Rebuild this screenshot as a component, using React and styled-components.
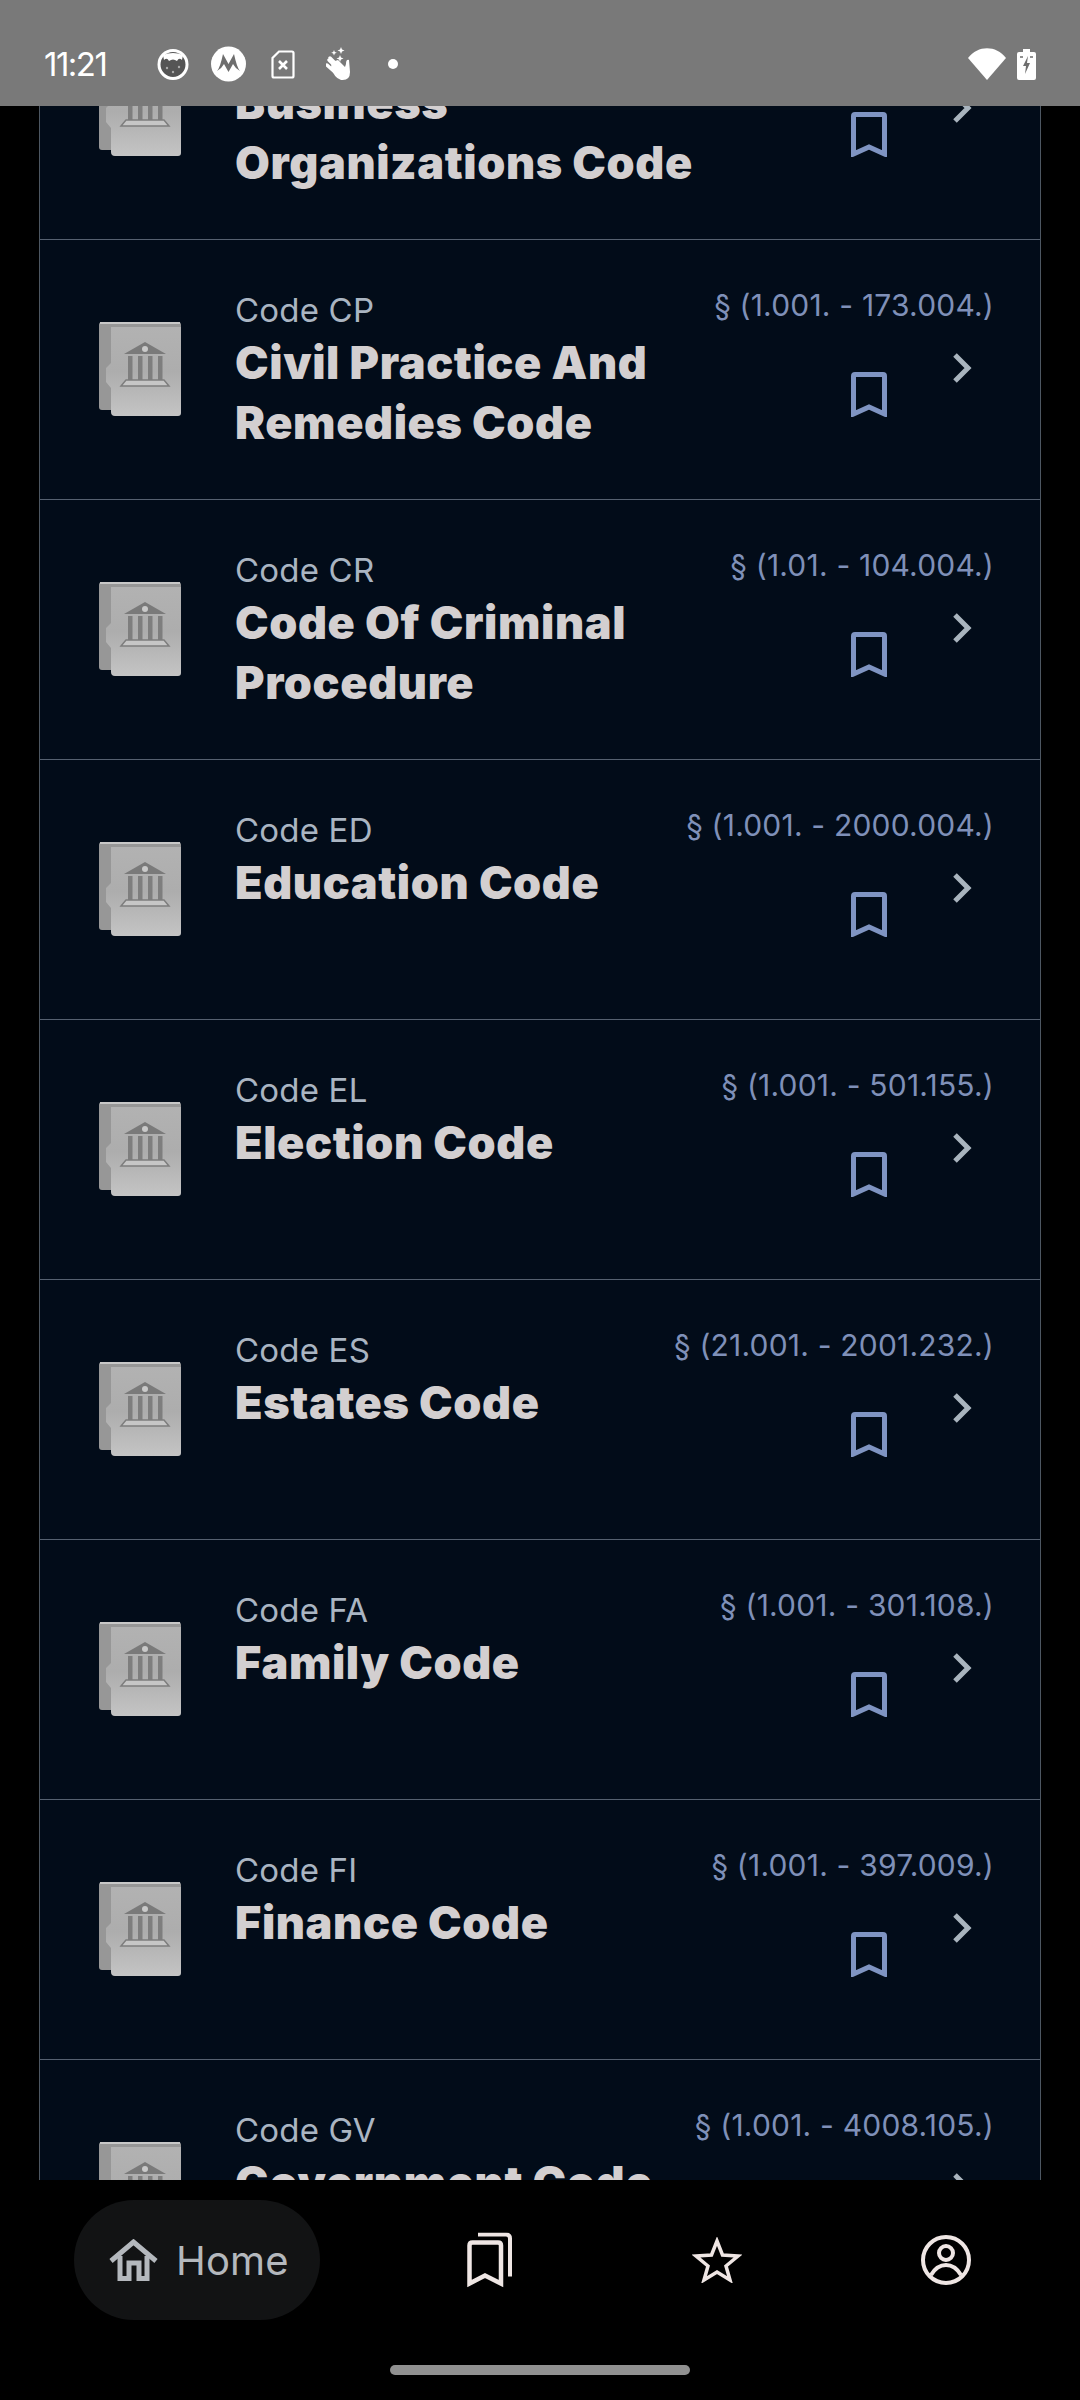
import React from "react";
import styled, { createGlobalStyle } from "styled-components";

const CODES = [
  { code: "Code BO", title: "Business Organizations Code", range: "§ (1.001. - 252.017.)" },
  { code: "Code CP", title: "Civil Practice And Remedies Code", range: "§ (1.001. - 173.004.)" },
  { code: "Code CR", title: "Code Of Criminal Procedure", range: "§ (1.01. - 104.004.)" },
  { code: "Code ED", title: "Education Code", range: "§ (1.001. - 2000.004.)" },
  { code: "Code EL", title: "Election Code", range: "§ (1.001. - 501.155.)" },
  { code: "Code ES", title: "Estates Code", range: "§ (21.001. - 2001.232.)" },
  { code: "Code FA", title: "Family Code", range: "§ (1.001. - 301.108.)" },
  { code: "Code FI", title: "Finance Code", range: "§ (1.001. - 397.009.)" },
  { code: "Code GV", title: "Government Code", range: "§ (1.001. - 4008.105.)" },
];

function FolderIcon() {
  return (
    <Folder viewBox="0 0 84 96">
      <defs>
        <linearGradient id="cover" x1="0" y1="0" x2="0" y2="1">
          <stop offset="0" stopColor="#b2b2b2" />
          <stop offset="0.5" stopColor="#adadad" />
          <stop offset="1" stopColor="#c4c4c4" />
        </linearGradient>
      </defs>
      <rect x="0" y="0" width="82" height="88" rx="3" fill="#979797" />
      <path d="M12 5 H82 V91 Q82 94 79 94 H16 Q12 94 12 90 V66 L7 60 V46 L12 41 Z" fill="url(#cover)" />
      <rect x="1" y="0" width="80" height="2" fill="#c8c8c8" />
      <path d="M25 32 L46 20 L67 32 Z" fill="#7a7a7a" />
      <circle cx="46" cy="27" r="3" fill="#c9c9c9" />
      <rect x="29" y="34" width="4.5" height="24" fill="#7e7e7e" />
      <rect x="39" y="34" width="4.5" height="24" fill="#7e7e7e" />
      <rect x="49" y="34" width="4.5" height="24" fill="#7e7e7e" />
      <rect x="59" y="34" width="4.5" height="24" fill="#7e7e7e" />
      <path d="M27 58 H65 L70 64 H22 Z" fill="#c6c6c6" stroke="#7e7e7e" strokeWidth="1.5" />
    </Folder>
  );
}

function BookmarkIcon() {
  return (
    <Bookmark viewBox="0 0 36 45">
      <path d="M2.5 42 V4 Q2.5 2.5 4 2.5 H32 Q33.5 2.5 33.5 4 V42 L18 35 Z" fill="none" stroke="#7f94c2" strokeWidth="5" />
    </Bookmark>
  );
}

function ChevronIcon() {
  return (
    <Chevron viewBox="0 0 19 30">
      <path d="M2 2 L15 15 L2 28" fill="none" stroke="#a9b4be" strokeWidth="5" />
    </Chevron>
  );
}

function CodeRow({ code, title, range }) {
  return (
    <Row>
      <FolderIcon />
      <Body>
        <Head>
          <Label>{code}</Label>
          <Range>{range}</Range>
        </Head>
        <Main>
          <Title>{title}</Title>
          <Actions>
            <BookmarkIcon />
            <ChevronIcon />
          </Actions>
        </Main>
      </Body>
    </Row>
  );
}

function App() {
  return (
    <>
      <GlobalStyle />
      <Screen>
        <StatusBar>
          <Time>11:21</Time>
          <StatusIcon viewBox="0 0 32 31" width="32" height="31" $gap={51}>
            <circle cx="16" cy="15.5" r="14" fill="#555" stroke="#fff" strokeWidth="3" />
            <path d="M6 6 Q16 2 26 6 L25 11 Q22 8 20 12 Q16 9 12 12 Q10 8 7 11 Z" fill="#fff" />
            <circle cx="10" cy="19" r="1.2" fill="#aaa" />
            <circle cx="16" cy="23" r="1.2" fill="#aaa" />
            <circle cx="22" cy="18" r="1.2" fill="#aaa" />
          </StatusIcon>
          <StatusIcon viewBox="0 0 35 36" width="35" height="36" $gap={22}>
            <circle cx="17.5" cy="18" r="17.5" fill="#fff" />
            <path d="M6 25 Q9 22 12 8 L17.5 18 L23 8 Q26 22 29 25 Q24 22 22 18 L17.5 26 L13 18 Q11 22 6 25 Z" fill="#6e6e6e" />
          </StatusIcon>
          <StatusIcon viewBox="0 0 24 29" width="24" height="29" $gap={25}>
            <path d="M8 1.5 H21 Q22.5 1.5 22.5 3 V26 Q22.5 27.5 21 27.5 H3 Q1.5 27.5 1.5 26 V8 Z" fill="none" stroke="#fff" strokeWidth="2.2" />
            <path d="M8 11 L16 19 M16 11 L8 19" stroke="#fff" strokeWidth="2.6" />
          </StatusIcon>
          <StatusIcon viewBox="0 0 25 34" width="25" height="34" $gap={31}>
            <path d="M15 0 l1 2.5 2.5 1 -2.5 1 -1 2.5 -1 -2.5 -2.5 -1 2.5 -1 Z M8 3 l.8 2 2 .8 -2 .8 -.8 2 -.8 -2 -2 -.8 2 -.8 Z M14 8 l1 2.5 2.5 1 -2.5 1 -1 2.5 -1 -2.5 -2.5 -1 2.5 -1 Z" fill="#fff" />
            <path d="M3 13 L12 22 M1 18 L11 27 M4 11 L14 21" stroke="#fff" strokeWidth="3.4" strokeLinecap="round" />
            <path d="M5 20 Q8 31 15 33 Q24 34 24 25 L23 13 Q20 12 20 17 L19 20 L12 13 L6 15 Z" fill="#fff" />
          </StatusIcon>
          <Dot />
          <StatusRight>
            <svg viewBox="0 0 38 32" width="38" height="32">
              <path d="M0 10 C10 -3 28 -3 38 10 L19 32 Z" fill="#fff" />
            </svg>
            <svg viewBox="0 0 19 31" width="19" height="31">
              <path d="M6 0 H13 V3 H17 Q19 3 19 5 V29 Q19 31 17 31 H2 Q0 31 0 29 V5 Q0 3 2 3 H6 Z" fill="#fff" />
              <path d="M11 7 L6 17 H9 L8 25 L13 14 H10 Z" fill="#6e6e6e" />
              <path d="M3 8 H6 M13 8 H16" stroke="#6e6e6e" strokeWidth="1.5" />
            </svg>
          </StatusRight>
        </StatusBar>
        <ListArea>
          <List>
            {CODES.map((item) => (
              <CodeRow key={item.code} {...item} />
            ))}
          </List>
        </ListArea>
        <BottomNav>
          <HomeTab>
            <svg viewBox="0 0 49 42" width="49" height="42">
              <path d="M2 22 L24.5 3 L47 22" fill="none" stroke="#b4b8bd" strokeWidth="5" />
              <path d="M11 17 V39.5 H20 V24 H30 V39.5 H38 V17" fill="none" stroke="#b4b8bd" strokeWidth="5" />
            </svg>
            <HomeLabel>Home</HomeLabel>
          </HomeTab>
          <NavIcon viewBox="0 0 45 55" width="45" height="55" $left={467}>
            <path d="M11 2 H39 Q43 2 43 6 V44" fill="none" stroke="#efe6e4" strokeWidth="4" />
            <path d="M2.5 51 V13 Q2.5 10 5.5 10 H31 Q34 10 34 13 V51 L18 43 Z" fill="none" stroke="#efe6e4" strokeWidth="4.5" />
          </NavIcon>
          <NavIcon viewBox="0 0 50 46" width="50" height="46" $left={692}>
            <path d="M25 4 L30.5 18 L46 19 L34 29 L38 43 L25 35 L12 43 L16 29 L4 19 L19.5 18 Z" fill="none" stroke="#efe6e4" strokeWidth="3.5" />
          </NavIcon>
          <NavIcon viewBox="0 0 50 50" width="50" height="50" $left={921}>
            <circle cx="25" cy="25" r="23" fill="none" stroke="#efe6e4" strokeWidth="4" />
            <circle cx="25" cy="18" r="7" fill="none" stroke="#efe6e4" strokeWidth="4" />
            <path d="M10 40 Q16 30 25 30 Q34 30 40 40" fill="none" stroke="#efe6e4" strokeWidth="4" />
          </NavIcon>
          <HomeIndicator />
        </BottomNav>
      </Screen>
    </>
  );
}

const GlobalStyle = createGlobalStyle`
  html, body {
    margin: 0;
    padding: 0;
    background: #000;
  }
`;

const Screen = styled.div`
  display: flex;
  flex-direction: column;
  width: 1080px;
  height: 2400px;
  overflow: hidden;
  background: #000;
  font-family: "Inter", "Liberation Sans", sans-serif;
`;

const StatusBar = styled.div`
  flex: none;
  display: flex;
  align-items: center;
  height: 84px;
  padding: 22px 44px 0 44px;
  background: #797979;
  color: #fff;
`;

const Time = styled.span`
  width: 62px;
  font-size: 33px;
  line-height: 40px;
  letter-spacing: -1.5px;
  white-space: nowrap;
`;

const StatusIcon = styled.svg`
  flex: none;
  margin-left: ${(props) => props.$gap}px;
`;

const Dot = styled.span`
  width: 10px;
  height: 10px;
  margin-left: 37px;
  border-radius: 50%;
  background: #fff;
`;

const StatusRight = styled.div`
  display: flex;
  align-items: center;
  gap: 11px;
  margin-left: auto;
`;

const ListArea = styled.div`
  flex: 1;
  overflow: hidden;
`;

const List = styled.div`
  width: 1000px;
  margin: -126px 0 0 39px;
  border-left: 1px solid #4d5762;
  border-right: 1px solid #4d5762;
  background: #020c19;
`;

const Row = styled.div`
  box-sizing: border-box;
  display: flex;
  height: 260px;
  padding: 48px 46px 0 59px;
  border-bottom: 1px solid #566170;
`;

const Folder = styled.svg`
  flex: none;
  width: 84px;
  height: 96px;
  margin: 34px 52px 0 0;
`;

const Body = styled.div`
  flex: 1;
  min-width: 0;
`;

const Head = styled.div`
  display: flex;
  justify-content: space-between;
  height: 45px;
`;

const Label = styled.span`
  font-size: 33px;
  line-height: 44px;
  letter-spacing: 0.2px;
  color: #aab5c2;
`;

const Range = styled.span`
  font-size: 30px;
  line-height: 34px;
  letter-spacing: 0.2px;
  color: #7f90b8;
`;

const Main = styled.div`
  display: flex;
  justify-content: space-between;
`;

const Title = styled.div`
  width: 480px;
  font-size: 45px;
  font-weight: 900;
  line-height: 60px;
  letter-spacing: 0.6px;
  color: #d3cfd0;
`;

const Actions = styled.div`
  display: flex;
  align-items: flex-start;
  gap: 66px;
  padding-right: 22px;
`;

const Bookmark = styled.svg`
  width: 36px;
  height: 45px;
  margin-top: 39px;
`;

const Chevron = styled.svg`
  width: 19px;
  height: 30px;
  margin-top: 20px;
`;

const BottomNav = styled.div`
  flex: none;
  position: relative;
  display: flex;
  height: 220px;
  background: #000;
`;

const HomeTab = styled.div`
  position: absolute;
  top: 20px;
  left: 74px;
  display: flex;
  align-items: center;
  gap: 18px;
  box-sizing: border-box;
  width: 246px;
  height: 120px;
  padding-left: 35px;
  border-radius: 60px;
  background: #121314;
`;

const HomeLabel = styled.span`
  font-size: 40px;
  letter-spacing: 0.2px;
  color: #b4b8bd;
`;

const NavIcon = styled.svg`
  position: absolute;
  top: 80px;
  left: ${(props) => props.$left}px;
  transform: translateY(-50%);
`;

const HomeIndicator = styled.div`
  position: absolute;
  left: 390px;
  bottom: 25px;
  width: 300px;
  height: 10px;
  border-radius: 5px;
  background: #909090;
`;

export default App;
